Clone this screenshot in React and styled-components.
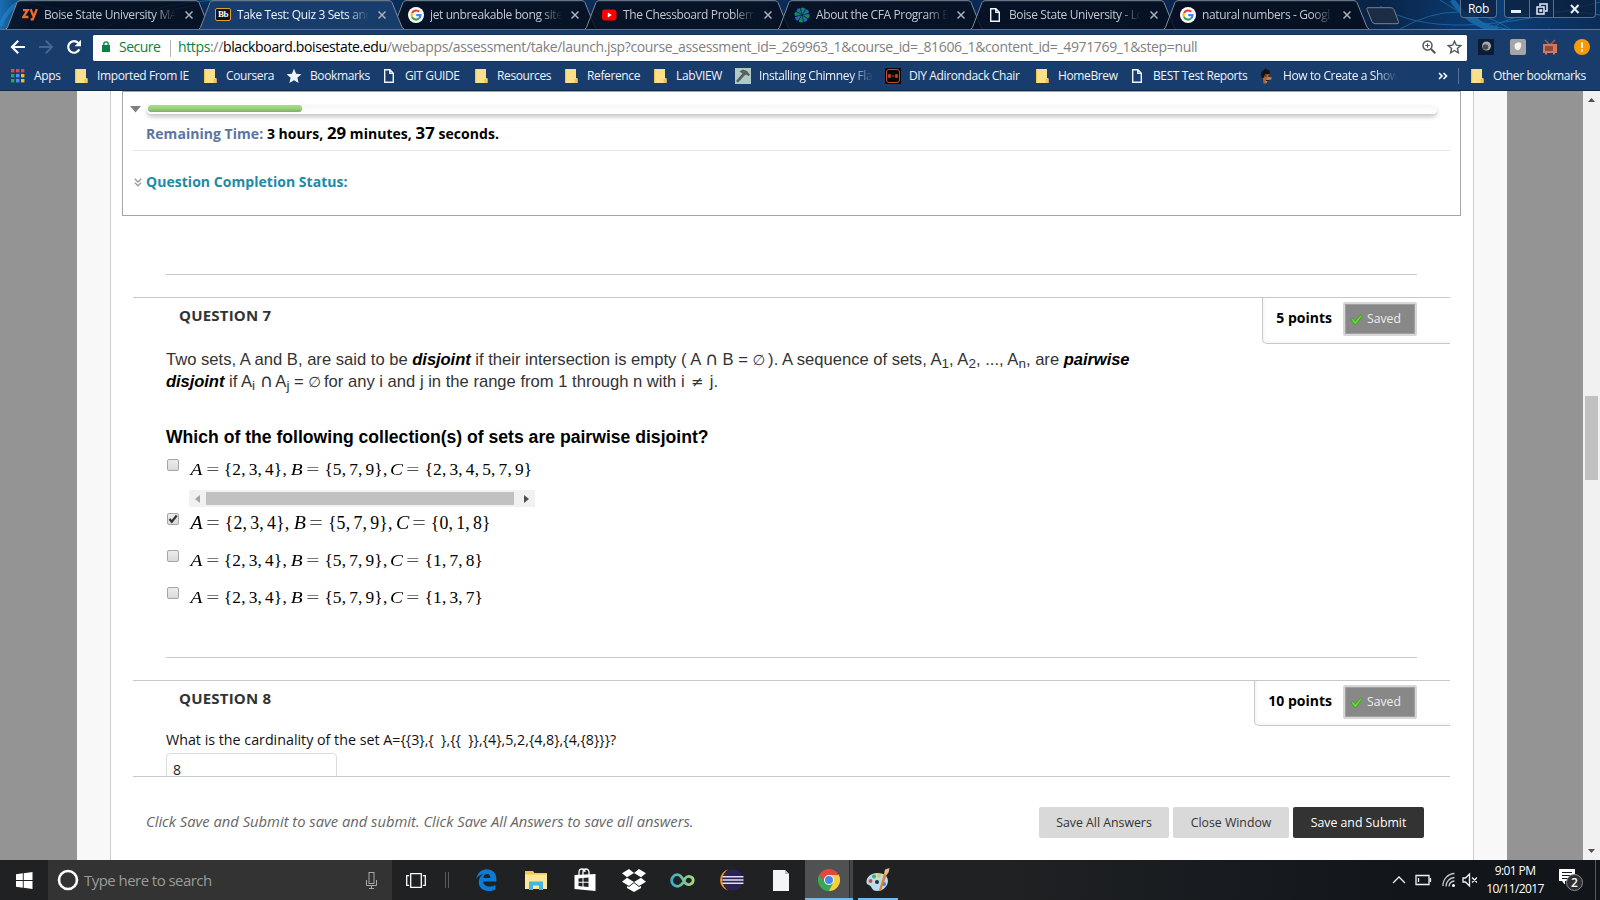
import React from "react";
import styled, { createGlobalStyle, css } from "styled-components";

const GlobalStyle = createGlobalStyle`
  * { box-sizing: border-box; }
  body { margin: 0; overflow: hidden; background: #fff; }
  svg { display: block; flex: none; }
`;

const uiFont = css`
  font-family: "Open Sans", "Noto Sans", sans-serif;
  letter-spacing: -0.38px;
  white-space: nowrap;
`;

const Screen = styled.div`
  width: 1600px;
  height: 900px;
  display: flex;
  flex-direction: column;
  overflow: hidden;
  font-family: "Open Sans", sans-serif;
`;

/* ---------- tab strip ---------- */
const TabStrip = styled.div`
  position: relative;
  height: 29px;
  flex: none;
  display: flex;
  padding-left: 6px;
  background: #0b2e5b;
  overflow: hidden;
`;
const Backdrop = styled.svg`
  position: absolute;
  left: 0;
  top: 0;
`;
const TabBox = styled.div`
  position: relative;
  z-index: ${(p) => (p.$active ? 2 : 1)};
  width: 193px;
  height: 29px;
  flex: none;
  display: flex;
  align-items: center;
  padding-left: 16px;
  color: ${(p) => (p.$active ? "#eef2f7" : "#c3c7cd")};
`;
const TabShape = styled.svg`
  position: absolute;
  left: 0;
  top: 0;
  overflow: visible;
`;
const TabIcon = styled.span`
  position: relative;
  width: 16px;
  flex: none;
`;
const TabLabel = styled.span`
  ${uiFont}
  position: relative;
  margin-left: 6px;
  width: 132px;
  font-size: 12px;
  line-height: 29px;
  mask-image: linear-gradient(to right, #000 110px, transparent 132px);
`;
const TabClose = styled.svg`
  position: relative;
  margin-left: 9px;
`;
const NewTab = styled.svg`
  position: relative;
  margin: 7px 0 0 9px;
`;
const WindowControls = styled.div`
  position: relative;
  margin-left: auto;
  display: flex;
  align-items: flex-start;
  padding-right: 4px;
  gap: 7px;
`;
const ControlGroup = styled.div`
  height: 18px;
  width: ${(p) => p.$w}px;
  border: 1px solid #56708f;
  border-top: 0;
  border-radius: 0 0 4px 4px;
  background: rgba(12, 32, 62, 0.75);
  display: flex;
  color: #fff;
  ${uiFont}
  font-size: 12px;
  line-height: 18px;
  justify-content: ${(p) => (p.$cells ? "flex-start" : "center")};
`;
const ControlCell = styled.div`
  width: ${(p) => p.$w}px;
  display: flex;
  align-items: center;
  justify-content: center;
  border-left: ${(p) => (p.$first ? "0" : "1px solid #56708f")};
`;

/* ---------- toolbar ---------- */
const Toolbar = styled.div`
  height: 33px;
  flex: none;
  display: flex;
  align-items: flex-start;
  padding: 4px 10px 0;
  background: #183d6d;
  border-top: 1px solid #5c7391;
`;
const NavIcons = styled.div`
  display: flex;
  width: 83px;
  height: 26px;
  align-items: center;
  gap: 12px;
`;
const Omnibox = styled.div`
  width: 1374px;
  height: 28px;
  border: 1px solid #142f56;
  border-width: 1px 0;
  background: #fff;
  border-radius: 2px;
  display: flex;
  align-items: flex-start;
  padding: 0 5px 0 9px;
`;
const LockIcon = styled.svg`
  margin-top: 6px;
`;
const Secure = styled.span`
  ${uiFont}
  color: #0b8043;
  font-size: 14px;
  line-height: 24px;
  letter-spacing: -0.5px;
  margin-left: 9px;
  width: 51px;
`;
const OmniDivider = styled.span`
  width: 1px;
  height: 17px;
  margin-top: 5px;
  background: #b4b4b4;
  margin-right: 7px;
`;
const Url = styled.span`
  ${uiFont}
  font-size: 14px;
  line-height: 24px;
  letter-spacing: -0.354px;
  color: #808080;
  flex: 1;
`;
const UrlScheme = styled.span`color: #0b8043;`;
const UrlHost = styled.span`color: #000;`;
const OmniActions = styled.div`
  display: flex;
  gap: 11px;
  margin-top: 5px;
`;
const Extensions = styled.div`
  display: flex;
  height: 26px;
  align-items: center;
  gap: 16px;
  margin-left: 11px;
`;

/* ---------- bookmarks ---------- */
const BookmarksBar = styled.div`
  height: 29px;
  flex: none;
  display: flex;
  align-items: center;
  padding-left: 10px;
  background: #183d6d;
  border-bottom: 1px solid #10294c;
`;
const Bookmark = styled.div`
  width: ${(p) => p.$w}px;
  display: flex;
  align-items: center;
  gap: 8px;
  flex: none;
`;
const BookmarkLabel = styled.span`
  ${uiFont}
  color: #f0f3f7;
  font-size: 12px;
  line-height: 28px;
  ${(p) =>
    p.$fade &&
    css`
      mask-image: linear-gradient(to right, #000 92px, transparent 114px);
    `}
`;
const BarDivider = styled.span`
  width: 1px;
  height: 16px;
  background: #54709a;
  margin: 0 10px;
`;

/* ---------- page ---------- */
const Viewport = styled.div`
  height: 769px;
  flex: none;
  display: flex;
  background: #949494;
  padding-left: 77px;
`;
const PageFrame = styled.div`
  width: 1430px;
  background: #f8f8f8;
  padding: 0 33px;
`;
const Sheet = styled.main`
  width: 1364px;
  height: 769px;
  border: 1px solid #ccc;
  border-width: 0 1px;
  background: #fff;
  display: flex;
  flex-direction: column;
`;
const ScrollArea = styled.div`
  height: 685px;
  overflow: hidden;
`;
const PageScrollbar = styled.div`
  margin-left: auto;
  width: 17px;
  background: #f1f1f1;
  display: flex;
  flex-direction: column;
  align-items: center;
  padding: 7px 0;
`;
const PageThumb = styled.div`
  width: 13px;
  height: 84px;
  margin: 294px 0 auto;
  background: #c1c1c1;
`;
const StatusBox = styled.section`
  margin: 0 11px 0 11px;
  width: 1339px;
  height: 125px;
  border: 1px solid #a5a5a5;
  padding: 13px 10px 0 7px;
`;
const TimerRow = styled.div`
  display: flex;
  gap: 6px;
`;
const Track = styled.div`
  width: 1290px;
  height: 9px;
  border-radius: 5px;
  padding: 0 1px;
  background: linear-gradient(#f7f7f7, #fff);
  box-shadow: 0 3px 4px rgba(0, 0, 0, 0.22);
`;
const Progress = styled.div`
  width: 154px;
  height: 7px;
  border-radius: 3px;
  background: linear-gradient(#a7e086, #9bd07c 50%, #80ab6c);
`;
const Remaining = styled.div`
  margin: 10px 0 0 16px;
  height: 20px;
  line-height: 20px;
  font-size: 14px;
  font-weight: 700;
  letter-spacing: 0.04px;
  white-space: nowrap;
  color: #000;
`;
const RemainingLabel = styled.span`color: #5c74a0;`;
const BigNumber = styled.span`
  font-size: 16.8px;
  line-height: 0;
`;
const Rule = styled.div`
  height: 1px;
  background: ${(p) => (p.$light ? "#e5e5e5" : "#c8c8c8")};
  margin: ${(p) => p.$m};
`;
const StatusTitle = styled.div`
  margin: 21px 0 0 4px;
  display: flex;
  align-items: center;
  gap: 4px;
  height: 20px;
  line-height: 20px;
  font-size: 14px;
  font-weight: 700;
  letter-spacing: 0.04px;
  color: #218aa6;
`;
const QuestionHead = styled.header`
  margin: 0 23px 0 22px;
  width: 1317px;
  height: 46px;
  display: flex;
  justify-content: space-between;
`;
const QuestionTitle = styled.h3`
  margin: 2px 0 0 46px;
  font-size: 15px;
  line-height: 30px;
  font-weight: 700;
  letter-spacing: 0.2px;
  color: #333;
`;
const PointsBox = styled.div`
  height: ${(p) => p.$h}px;
  border: 1px solid #c8c8c8;
  border-width: 0 0 1px 1px;
  border-radius: 0 0 0 5px;
  box-shadow: inset 2px -2px 3px rgba(0, 0, 0, 0.04);
  padding: 4px 33px 0 13px;
  display: flex;
  gap: 11px;
  font-size: 14px;
  line-height: 31px;
  font-weight: 700;
  color: #000;
`;
const SavedButton = styled.button`
  width: 74px;
  height: 34px;
  padding: 0 0 0 5px;
  border: 2px solid #d6d6d6;
  border-radius: 2px;
  box-shadow: inset 0 0 0 1px #a0a0a0;
  background: #888;
  display: flex;
  align-items: center;
  gap: 4px;
  font: 12.2px/28px "Open Sans", sans-serif;
  color: #eee;
`;
const Prompt = styled.p`
  margin: 5px 0 0 55px;
  width: 980px;
  height: 44px;
  font: 16.6px/22px "Liberation Sans", Arial, sans-serif;
  color: #333;
  white-space: nowrap;
  b { font-style: italic; color: #000; letter-spacing: -0.08px; }
  sub { font-size: 13.5px; line-height: 0; vertical-align: -3px; }
`;
const Symbol = styled.span`
  display: inline-block;
  text-align: center;
  line-height: 0;
  width: ${(p) => p.$w}px;
  font-family: "DejaVu Sans", sans-serif;
  font-size: ${(p) => p.$s}px;
`;
const Ask = styled.p`
  margin: 33px 0 0 55px;
  font: bold 17.6px/22px "Liberation Sans", Arial, sans-serif;
  color: #000;
`;
const Answers = styled.div`
  margin: 11px 0 0 56px;
  height: 198px;
`;
const Answer = styled.div`
  height: ${(p) => p.$h}px;
  display: flex;
  gap: 10px;
`;
const Check = styled.span`
  width: 12px;
  height: 12px;
  border: 1px solid #a5a5a5;
  border-radius: 2px;
  background: linear-gradient(#ececec, #dadada);
`;
const AnswerBody = styled.div`
  padding-top: ${(p) => p.$top}px;
`;
const Formula = styled.div`
  font-family: "Liberation Serif", "Times New Roman", serif;
  font-size: ${(p) => p.$s}px;
  line-height: 20px;
  height: 20px;
  padding-left: 0.5px;
  display: flex;
  color: #000;
`;
const Glyph = styled.span`
  width: ${(p) => p.$w}em;
  margin: 0 ${(p) => p.$mr || 0}em 0 ${(p) => p.$ml || 0}em;
  text-align: center;
  font-style: ${(p) => (p.$it ? "italic" : "normal")};
  font-size: inherit;
  transform: ${(p) => p.$t || "none"};
  color: ${(p) => p.$c || "inherit"};
`;
const InlineScrollbar = styled.div`
  margin-top: 10px;
  width: 346px;
  height: 17px;
  padding: 0 6px;
  background: #f1f1f1;
  display: flex;
  align-items: center;
  gap: 6px;
`;
const InlineThumb = styled.div`
  width: 309px;
  height: 13px;
  margin-right: 4px;
  background: #c1c1c1;
`;
const ShortPrompt = styled.p`
  margin: 3px 0 0 55px;
  font-size: 14.27px;
  line-height: 20px;
  color: #111;
  white-space: pre;
`;
const AnswerField = styled.div`
  margin: 3px 0 0 55px;
  width: 171px;
  height: 36px;
  border: 1px solid #dcdcdc;
  border-radius: 4px;
  padding: 6px 0 0 6px;
  font-size: 14px;
  line-height: 20px;
  color: #222;
`;
const SubmitBar = styled.footer`
  margin: 0 23px 0 22px;
  width: 1317px;
  height: 84px;
  border-top: 1px solid #c8c8c8;
  padding: 30px 26px 0 13px;
  display: flex;
  justify-content: space-between;
`;
const Hint = styled.span`
  font-size: 14.74px;
  line-height: 28px;
  font-style: italic;
  color: #666;
`;
const Buttons = styled.div`
  display: flex;
  gap: 4px;
`;
const ActionButton = styled.button`
  width: ${(p) => p.$w}px;
  height: 31px;
  border: 0;
  border-radius: 2px;
  padding: 0;
  background: ${(p) => (p.$dark ? "#333" : "#d9d9d9")};
  color: ${(p) => (p.$dark ? "#fff" : "#333")};
  font: 12.3px/31px "Open Sans", sans-serif;
`;

/* ---------- taskbar ---------- */
const Taskbar = styled.div`
  height: 40px;
  flex: none;
  display: flex;
  background: linear-gradient(to right, #1f2123 0 1000px, #12161b 1400px);
`;
const TaskCell = styled.div`
  width: ${(p) => p.$w}px;
  height: 40px;
  display: flex;
  align-items: center;
  justify-content: center;
  background: ${(p) => p.$bg || "transparent"};
  border-bottom: ${(p) => (p.$open ? "2px solid #76b9ed" : "0")};
  padding-top: ${(p) => (p.$open ? "2px" : "0")};
  margin-left: ${(p) => p.$ml || 0}px;
`;
const SearchBox = styled.div`
  width: 344px;
  background: #333;
  display: flex;
  align-items: center;
  padding: 0 14px 0 9px;
`;
const SearchText = styled.span`
  ${uiFont}
  font-size: 15px;
  line-height: 40px;
  letter-spacing: -0.55px;
  color: #9b9b9b;
  flex: 1;
  margin-left: 5px;
`;
const Tray = styled.div`
  margin-left: auto;
  display: flex;
  align-items: center;
`;
const Clock = styled.div`
  ${uiFont}
  width: 60px;
  margin: 0 14px 0 8px;
  text-align: center;
  color: #fff;
  font-size: 12px;
  line-height: 18px;
  letter-spacing: -0.6px;
`;
const ActionCenter = styled.div`
  position: relative;
  width: 24px;
  height: 26px;
`;
const Badge = styled.span`
  position: absolute;
  left: 7px;
  top: 7px;
  width: 17px;
  height: 17px;
  border-radius: 50%;
  border: 1px solid #8b8e91;
  background: #2c3035;
  color: #fff;
  font: 600 12px/15px "Open Sans", sans-serif;
  text-align: center;
`;
const ShowDesktop = styled.span`
  width: 1px;
  height: 40px;
  background: #55595d;
  margin: 0 4px 0 12px;
`;

/* ---------- icons ---------- */
const Zy = () => (
  <svg width="16" height="16" viewBox="0 0 16 16" fill="none" stroke="#ef6a2c" strokeWidth="2.3">
    <path d="M1 3.2h4.6L1.4 10H6.4M8.6 2.2l2.9 7M14.8 2.2l-4 10.2H8.6" />
  </svg>
);
const Blackboard = styled.span`
  display: block;
  width: 16px;
  height: 13px;
  background: #111;
  border: 1px solid #d8a631;
  border-radius: 2px;
  color: #fff;
  font: bold 9px/10px "Liberation Serif", serif;
  text-align: center;
  letter-spacing: -0.4px;
`;
const Bb = () => <Blackboard>Bb</Blackboard>;
const GoogleG = () => (
  <svg width="16" height="16" viewBox="0 0 16 16" fill="none" strokeWidth="2.2">
    <circle cx="8" cy="8" r="8" fill="#fff" />
    <path d="M11.2 4.8A4.5 4.5 0 0 0 4 6" stroke="#ea4335" />
    <path d="M4 6a4.5 4.5 0 0 0 0 4" stroke="#fbbc05" />
    <path d="M4 10a4.5 4.5 0 0 0 6.9 1.5" stroke="#34a853" />
    <path d="M10.9 11.5A4.5 4.5 0 0 0 12.5 8.2H8.2" stroke="#4285f4" />
  </svg>
);
const YouTube = () => (
  <svg width="16" height="16" viewBox="0 0 16 16">
    <rect x="1" y="2.5" width="14.5" height="11" rx="3" fill="#f00" />
    <path d="M6.8 5.6v4.8L10.8 8z" fill="#fff" />
  </svg>
);
const Cfa = () => (
  <svg width="16" height="16" viewBox="0 0 16 16">
    {[0, 45, 90, 135, 180, 225, 270, 315].map((a, i) => (
      <path key={a} d="M8 7.4L5.7 1.4Q8-.8 10.3 1.4z" fill={i % 2 ? "#2b68b4" : "#128a60"} transform={`rotate(${a + 10} 8 8)`} />
    ))}
  </svg>
);
const Page = () => (
  <svg width="16" height="16" viewBox="0 0 16 16" fill="none" stroke="#f2f4f7" strokeWidth="1.4">
    <path d="M3.7 1.7h5.2l3.4 3.6v9H3.7zM8.8 1.7v3.7h3.5" />
  </svg>
);
const Folder = () => (
  <svg width="16" height="16" viewBox="0 0 16 16">
    <path d="M2 1h11v10h1.5v4H2z" fill="#fbe08a" />
    <path d="M2 1h1.2v14H2zM11.5 11h1.5v-1h1.5v5h-3z" fill="#ecc94c" />
  </svg>
);
const AppsGrid = () => (
  <svg width="16" height="16" viewBox="0 0 16 16">
    {["#e8453c", "#e8453c", "#e8453c", "#2da44e", "#4a90f0", "#f6b926", "#2da44e", "#4a90f0", "#f6b926"].map((c, i) => (
      <rect key={i} x={1 + (i % 3) * 5} y={1 + Math.floor(i / 3) * 5} width="3.4" height="3.4" fill={c} />
    ))}
  </svg>
);
const StarSolid = () => (
  <svg width="16" height="16" viewBox="0 0 16 16">
    <path d="M8 .8l2.1 4.9 5.3.5-4 3.5 1.2 5.2L8 12.200l-4.600 2.700 1.200-5.200-4-3.500 5.300-.5z" fill="#f0f4f9" />
  </svg>
);
const Hammer = () => (
  <svg width="16" height="16" viewBox="0 0 16 16">
    <rect width="16" height="16" fill="#afc9c4" />
    <path d="M4.500 3.500L8 1.500l4 1.500 3 4-1.500 1L11 6.500 9.500 7.500 3 14.500 1 13 7.500 5.500z" fill="#575f5f" />
  </svg>
);
const BlackDecker = () => (
  <svg width="16" height="16" viewBox="0 0 16 16">
    <rect width="16" height="16" fill="#060606" />
    <rect x="1.500" y="1.500" width="13" height="13" rx="2.500" fill="none" stroke="#cf4a20" />
    <path d="M3.500 6.500h2v3h-2zM6.500 8h3M8 6.700v2.600M10.500 6.500h2v3h-2z" fill="#cf4a20" stroke="#cf4a20" strokeWidth=".6" />
  </svg>
);
const Face = () => (
  <svg width="16" height="16" viewBox="0 0 16 16">
    <path d="M3.500 5h7l-.5 6-3 4.500H4.500z" fill="#a9673c" />
    <path d="M2 7q0-4 3-5l1-1.500 2 1 2.500 1 .5 3.500-5 .5-1 3-2 1z" fill="#17110f" />
    <path d="M9 9l4 .5-1 2-3 .5-1.500 3H6z" fill="#c98252" />
    <path d="M6 8h1.500M9 8h1.500M7 12.500h3" stroke="#2a1810" />
  </svg>
);
const Chevron2 = () => (
  <svg width="10" height="8" viewBox="0 0 10 8" fill="none" stroke="#fff" strokeWidth="1.600">
    <path d="M1 1l3 3-3 3M5.500 1l3 3-3 3" />
  </svg>
);
const Tick = () => (
  <svg width="13" height="13" viewBox="0 0 13 13">
    <path d="M.8 6.300L3 5.200 5.300 8 10.500 1.800 12.500 2.600 6 11.500H4.600z" fill="#5edb30" stroke="#348f1b" strokeWidth=".6" />
  </svg>
);
const Arrow = ({ d, w, h, c = "#505050" }) => (
  <svg width={w} height={h} viewBox={`0 0 ${w} ${h}`}><path d={d} fill={c} /></svg>
);

const Chrome = () => (
  <svg width="22" height="22" viewBox="0 0 22 22">
    <path d="M11 11L1.470 5.500A11 11 0 0 1 20.530 5.500z" fill="#e0493c" />
    <path d="M11 11L20.530 5.500A11 11 0 0 1 11 22z" fill="#fccd3d" />
    <path d="M11 6h9.700l-5.400 7.500z" fill="#fccd3d" />
    <path d="M1.470 5.500L6.700 13.500 11 6z" fill="#e0493c" />
    <path d="M1.470 5.500L6.700 13.500 11 16 15.300 13.500 11 22A11 11 0 0 1 1.470 5.500z" fill="#3aa757" />
    <circle cx="11" cy="11" r="5" fill="#fff" />
    <circle cx="11" cy="11" r="4" fill="#4788f0" />
  </svg>
);
const Edge = () => (
  <svg width="21" height="22" viewBox="0 0 21 22">
    <path d="M.4 9.800C1.300 3.700 5.300.2 10.800.2c6 0 9.600 4.300 9.600 10v2.400H7.200c.2 3.400 3 5 6.300 5 2.200 0 4.200-.6 5.900-1.700v4.600C17.500 21.500 15.200 22 12.700 22 6.700 22 2.700 18.500 2.700 13c0-3.500 1.900-6.300 5-7.900C5 5.500 2.400 7 .4 9.800zM7.400 9h6.900c0-2.500-1.100-3.900-3.300-3.900S7.700 6.700 7.400 9z" fill="#0a7bd8" />
  </svg>
);
const Explorer = () => (
  <svg width="22" height="19" viewBox="0 0 22 19">
    <path d="M0 0h8l1.500 2H22v16H0z" fill="#f5c84f" />
    <path d="M0 3.500h22V18H0z" fill="#ffe69a" />
    <path d="M4 10.500h14V19h-4v-4.500H8V19H4z" fill="#41b5e8" />
  </svg>
);
const Store = () => (
  <svg width="22" height="24" viewBox="0 0 22 24">
    <path d="M5 8V4q0-3 3-3t3 3M9 7V3.500Q9.500 1 12 1t3 3v3" fill="none" stroke="#fff" strokeWidth="1.300" />
    <path d="M.5 7L21.500 6v17L.5 21z" fill="#fff" />
    <path d="M4.500 10.500l4-.4v3.700h-4zM9.500 10l5-.5v4.300h-5zM4.500 14.700h4v3.700l-4-.4zM9.500 14.700h5V19l-5-.5z" fill="#202224" />
  </svg>
);
const Dropbox = () => (
  <svg width="24" height="23" viewBox="0 0 24 23" fill="#fff">
    <path d="M7 0l5 4-7 4.300L0 4.300zM17 0l7 4.300-5 4L12 4zM5 8.800l7 4.200-5 4-7-4.200zM19 8.800l5 4L17 17l-5-4zM12 14l5 4.100 2-1.200v2L12 23l-7-4.100v-2l2 1.200z" />
  </svg>
);
const Infinity8 = () => (
  <svg width="25" height="15" viewBox="0 0 25 15" fill="none" strokeWidth="2.800">
    <defs><linearGradient id="inf"><stop offset="0" stopColor="#42a9c9" /><stop offset="1" stopColor="#a4d977" /></linearGradient></defs>
    <path d="M14 8.500C11.500 12 10 13.300 7.400 13.300A5.800 5.800 0 0 1 7.400 1.700C11.500 1.700 13 7 15.500 10.300 18 13 23.200 11 23.200 7.200S17.500 2 15 5.500z" stroke="url(#inf)" />
  </svg>
);
const Eclipse = () => (
  <svg width="24" height="22" viewBox="0 0 24 22">
    <path d="M8.500.3A11 11 0 0 0 8.500 21.700 12.500 12.500 0 0 1 8.500.3z" fill="#f7941e" />
    <circle cx="13" cy="11" r="10.600" fill="#2c2255" />
    <path d="M2.500 7.800h21M2.500 11h21M2.500 14.200h21" stroke="#e3e1ee" strokeWidth="1.500" />
  </svg>
);
const Doc = () => (
  <svg width="16" height="21" viewBox="0 0 16 21"><path d="M0 0h12l4 4v17H0z" fill="#f5f5f5" /><path d="M12 0v4h4z" fill="#bbb" /></svg>
);
const Paint = () => (
  <svg width="24" height="24" viewBox="0 0 24 24">
    <path d="M11 5c7 0 11 3 11 8s-5 10-11 10c-5 0-5-3.500-6.500-5S0 17 .5 13 5 5 11 5z" fill="#b9dcef" />
    <circle cx="4.500" cy="13" r="1.900" fill="#d9483b" /><circle cx="8" cy="8.500" r="1.900" fill="#4fae4b" />
    <circle cx="13" cy="7.500" r="1.900" fill="#f4c52c" /><circle cx="18" cy="16" r="1.900" fill="#3e7fd0" />
    <circle cx="11" cy="14" r="2" fill="#273138" />
    <path d="M21 6L15 23l-2-1 5-16z" fill="#d98434" />
    <path d="M18 6l1-4.500L23.500 0l-.8 4-2 3z" fill="#e6bd8d" />
  </svg>
);

/* ---------- data ---------- */
const tabs = [
  ["Boise State University MA", Zy],
  ["Take Test: Quiz 3 Sets and", Bb],
  ["jet unbreakable bong site", GoogleG],
  ["The Chessboard Problem", YouTube],
  ["About the CFA Program E", Cfa],
  ["Boise State University - Lo", Page],
  ["natural numbers - Googl", GoogleG],
];
const bookmarks = [
  ["Apps", AppsGrid, 63],
  ["Imported From IE", Folder, 129],
  ["Coursera", Folder, 84],
  ["Bookmarks", StarSolid, 95],
  ["GIT GUIDE", Page, 92],
  ["Resources", Folder, 90],
  ["Reference", Folder, 89],
  ["LabVIEW", Folder, 83],
  ["Installing Chimney Fla", Hammer, 150, true],
  ["DIY Adirondack Chair", BlackDecker, 149],
  ["HomeBrew", Folder, 95],
  ["BEST Test Reports", Page, 130],
  ["How to Create a Show", Face, 179, true],
];

const SetExpr = ({ name, items, last }) => (
  <>
    <Glyph $w={name === "A" ? 0.75 : name === "B" ? 0.76 : 0.74} $it $t="scaleX(1.12)">{name}</Glyph>
    <Glyph $w={0.778} $ml={0.18} $mr={0.27} $t="scaleX(1.35)" $c="#555">=</Glyph>
    <Glyph $w={0.49}>{"{"}</Glyph>
    {items.map((n, i) => (
      <React.Fragment key={i}>
        <Glyph $w={0.5}>{n}</Glyph>
        {i < items.length - 1 && <Glyph $w={0.278} $mr={0.167}>,</Glyph>}
      </React.Fragment>
    ))}
    <Glyph $w={0.49}>{"}"}</Glyph>
    {!last && <Glyph $w={0.278} $mr={0.167}>,</Glyph>}
  </>
);
const Sets = ({ c, size = 17.35 }) => (
  <Formula $s={size}>
    <SetExpr name="A" items={[2, 3, 4]} />
    <SetExpr name="B" items={[5, 7, 9]} />
    <SetExpr name="C" items={c} last />
  </Formula>
);
const Saved = () => (
  <SavedButton><Tick />Saved</SavedButton>
);

export default function App() {
  return (
    <Screen>
      <GlobalStyle />
      <TabStrip>
        <Backdrop width="1600" height="29" viewBox="0 0 1600 29">
          <defs>
            <linearGradient id="sky">
              <stop offset="0" stopColor="#1a6fb4" /><stop offset=".02" stopColor="#0a2c58" />
              <stop offset=".5" stopColor="#0b2c5a" /><stop offset=".86" stopColor="#0a2347" />
              <stop offset=".93" stopColor="#0b3f78" /><stop offset="1" stopColor="#0a2d59" />
            </linearGradient>
          </defs>
          <rect width="1600" height="29" fill="url(#sky)" />
          <g fill="none" stroke="#2490d4" opacity=".5">
            <path d="M0 26Q6 10 22 0" strokeWidth="4" />
            <path d="M100 29Q160 2 215 0M20 0q90 26 180 4" />
            <path d="M1400 29q60-34 110 0M1440 0q60 40 110 29" />
            <path d="M1452 0q20 28 46 29M1470 12q10 17 28 17" strokeWidth="5" />
            <path d="M1380 6q60 40 220-4M1490 29q40-26 110-14" />
          </g>
        </Backdrop>
        {tabs.map(([label, Icon], i) => {
          const active = i === 1;
          return (
            <TabBox key={label} $active={active}>
              <TabShape width="205" height="29" viewBox="0 0 205 29">
                <path
                  d="M0 29Q1.500 28 2 26L11 2.500Q12 .7 14 .7H190Q192 .7 193 2.500L202.500 26Q203 28 205 29"
                  fill={active ? "#183d6d" : "rgba(6,14,28,.82)"}
                  stroke="#7d8896"
                />
              </TabShape>
              <TabIcon><Icon /></TabIcon>
              <TabLabel>{label}</TabLabel>
              <TabClose width="8" height="8" viewBox="0 0 8 8" stroke="#a9b0b9" strokeWidth="1.500">
                <path d="M.5.5l7 7M7.500.5l-7 7" />
              </TabClose>
            </TabBox>
          );
        })}
        <NewTab width="36" height="18" viewBox="0 0 36 18">
          <path d="M1.500.7H25q2 0 3 2l4.500 12q.5 2-1.500 2H9q-2 0-3-2L1 2.500Q.5.7 1.500.7z" fill="#1c2c45" stroke="#76818f" />
        </NewTab>
        <WindowControls>
          <ControlGroup $w={37}>Rob</ControlGroup>
          <ControlGroup $w={92} $cells>
            <ControlCell $w={24} $first>
              <svg width="12" height="16"><rect x="0" y="9" width="10" height="3" fill="#e8edf3" /></svg>
            </ControlCell>
            <ControlCell $w={24}>
              <svg width="12" height="12" viewBox="0 0 12 12" fill="none" stroke="#e8edf3" strokeWidth="1.500">
                <path d="M4 3V1h7v7H9M1 4h7v7H1zM4 7h1.500v1H4z" />
              </svg>
            </ControlCell>
            <ControlCell $w={42}>
              <svg width="10" height="10" viewBox="0 0 10 10" stroke="#e8edf3" strokeWidth="2"><path d="M1 1l7.500 8M8.500 1L1 9" /></svg>
            </ControlCell>
          </ControlGroup>
        </WindowControls>
      </TabStrip>

      <Toolbar>
        <NavIcons>
          <svg width="16" height="16" viewBox="0 0 16 16" fill="none" stroke="#fff" strokeWidth="2.200"><path d="M15 8H2.500M8.200 1.800L2 8l6.200 6.200" /></svg>
          <svg width="16" height="16" viewBox="0 0 16 16" fill="none" stroke="#48658c" strokeWidth="2"><path d="M1 8h12.500M7.800 1.800L14 8l-6.200 6.200" /></svg>
          <svg width="16" height="16" viewBox="0 0 16 16"><path d="M13.300 10.300A5.800 5.800 0 1 1 12.300 4" fill="none" stroke="#fff" strokeWidth="2.200" /><path d="M15 .8v6.400H8.600z" fill="#fff" /></svg>
        </NavIcons>
        <Omnibox>
          <LockIcon width="8" height="11" viewBox="0 0 8 11"><path d="M0 4h8v7H0z" fill="#0b8043" /><path d="M1.800 4.500V3a2.200 2.200 0 0 1 4.400 0v1.500" fill="none" stroke="#0b8043" strokeWidth="1.300" /></LockIcon>
          <Secure>Secure</Secure>
          <OmniDivider />
          <Url>
            <UrlScheme>https</UrlScheme>://<UrlHost>blackboard.boisestate.edu</UrlHost>/webapps/assessment/take/launch.jsp?course_assessment_id=_269963_1&amp;course_id=_81606_1&amp;content_id=_4971769_1&amp;step=null
          </Url>
          <OmniActions>
            <svg width="14" height="14" viewBox="0 0 14 14" fill="none" stroke="#555" strokeWidth="1.500"><circle cx="5.500" cy="5.500" r="4.500" /><path d="M9 9l4.300 4.300" strokeWidth="2" /><path d="M3.300 5.500h4.400M5.500 3.300v4.400" strokeWidth="1.100" /></svg>
            <svg width="15" height="14" viewBox="0 0 15 14" fill="none" stroke="#555" strokeWidth="1.400"><path d="M7.500 1.200l1.800 4 4.400.4-3.300 2.900 1 4.300-3.900-2.300-3.900 2.300 1-4.300L1.300 5.600l4.400-.4z" /></svg>
          </OmniActions>
        </Omnibox>
        <Extensions>
          <svg width="16" height="16" viewBox="0 0 16 16"><rect width="16" height="16" fill="#0d1b33" /><circle cx="8.500" cy="7" r="4.500" fill="#aaa" /><circle cx="7.500" cy="8" r="2.800" fill="#444c59" /></svg>
          <svg width="16" height="16" viewBox="0 0 16 16"><rect width="16" height="16" rx="2" fill="#a5a5a5" /><path d="M5 5q3-3 6-1 1 4-2 7-4 1-4.500-4z" fill="#f3f3f3" /></svg>
          <svg width="16" height="16" viewBox="0 0 16 16"><path d="M3 1l5 5 5-5" fill="none" stroke="#a85c4c" strokeWidth="1.300" /><path d="M1 5h14v9H1zM3 14h2v1.500H3zM11 14h2v1.500h-2z" fill="#d4775c" /><path d="M3 7h8v5H3z" fill="#8f4a3e" /></svg>
          <svg width="16" height="16" viewBox="0 0 16 16"><circle cx="8" cy="8" r="8" fill="#f79a0a" /><path d="M8 3.500v5.500M8 10.500v2" stroke="#fff" strokeWidth="1.800" /></svg>
        </Extensions>
      </Toolbar>

      <BookmarksBar>
        {bookmarks.map(([label, Icon, w, fade]) => (
          <Bookmark key={label} $w={w}>
            <Icon />
            <BookmarkLabel $fade={fade}>{label}</BookmarkLabel>
          </Bookmark>
        ))}
        <Chevron2 />
        <BarDivider />
        <Bookmark $w={120}><Folder /><BookmarkLabel>Other bookmarks</BookmarkLabel></Bookmark>
      </BookmarksBar>

      <Viewport>
        <PageFrame>
          <Sheet>
            <ScrollArea>
              <StatusBox>
                <TimerRow>
                  <Arrow w={11} h={9} d="M0 1h11L5.500 7.500z" c="#808080" />
                  <Track><Progress /></Track>
                </TimerRow>
                <Remaining>
                  <RemainingLabel>Remaining Time:</RemainingLabel> 3 hours, <BigNumber>29</BigNumber> minutes, <BigNumber>37</BigNumber> seconds.
                </Remaining>
                <Rule $light $m="6px 0 0 3px" />
                <StatusTitle>
                  <svg width="8" height="9" viewBox="0 0 8 9" fill="none" stroke="#999" strokeWidth="1.300"><path d="M.8.8L4 4 7.200.8M.8 4.600L4 7.800l3.200-3.200" /></svg>
                  Question Completion Status:
                </StatusTitle>
              </StatusBox>

              <Rule $m="58px 56px 0 55px" />
              <Rule $m="22px 23px 0 22px" />
              <QuestionHead>
                <QuestionTitle>QUESTION 7</QuestionTitle>
                <PointsBox $h={46}>5 points<Saved /></PointsBox>
              </QuestionHead>
              <Prompt>
                Two sets, A and B, are said to be <b>disjoint</b> if their intersection is empty ( A <Symbol $w={13} $s={18}>∩</Symbol> B = <Symbol $w={11} $s={14.5}>∅</Symbol> ). A sequence of sets, A<sub>1</sub>, A<sub>2</sub>, ..., A<sub>n</sub>, are <b>pairwise</b>
                <br />
                <b>disjoint</b> if A<sub>i</sub> <Symbol $w={12} $s={18}>∩</Symbol> A<sub>j</sub> = <Symbol $w={11} $s={14.5}>∅</Symbol> for any i and j in the range from 1 through n with i <Symbol $w={16} $s={15}>≠</Symbol> j.
              </Prompt>
              <Ask>Which of the following collection(s) of sets are pairwise disjoint?</Ask>
              <Answers>
                <Answer $h={54}>
                  <Check />
                  <AnswerBody $top={1}>
                    <Sets c={[2, 3, 4, 5, 7, 9]} />
                    <InlineScrollbar>
                      <Arrow w={5} h={8} d="M5 0v8L0 4z" c="#a3a3a3" />
                      <InlineThumb />
                      <Arrow w={5} h={8} d="M0 0v8l5-4z" />
                    </InlineScrollbar>
                  </AnswerBody>
                </Answer>
                <Answer $h={37}>
                  <Check>
                    <svg width="10" height="10" viewBox="0 0 10 10" fill="none" stroke="#333" strokeWidth="2.200"><path d="M1.500 5l2.300 2.700L8.700 1.500" /></svg>
                  </Check>
                  <AnswerBody $top={0}><Sets c={[0, 1, 8]} size={17.8} /></AnswerBody>
                </Answer>
                <Answer $h={37}>
                  <Check />
                  <AnswerBody $top={1}><Sets c={[1, 7, 8]} /></AnswerBody>
                </Answer>
                <Answer $h={37}>
                  <Check />
                  <AnswerBody $top={1}><Sets c={[1, 3, 7]} /></AnswerBody>
                </Answer>
              </Answers>

              <Rule $m="0 56px 0 55px" />
              <Rule $m="22px 23px 0 22px" />
              <QuestionHead>
                <QuestionTitle>QUESTION 8</QuestionTitle>
                <PointsBox $h={45}>10 points<Saved /></PointsBox>
              </QuestionHead>
              <ShortPrompt>{"What is the cardinality of the set A={{3},{  },{{  }},{4},5,2,{4,8},{4,{8}}}?"}</ShortPrompt>
              <AnswerField>8</AnswerField>
            </ScrollArea>
            <SubmitBar>
              <Hint>Click Save and Submit to save and submit. Click Save All Answers to save all answers.</Hint>
              <Buttons>
                <ActionButton $w={130}>Save All Answers</ActionButton>
                <ActionButton $w={116}>Close Window</ActionButton>
                <ActionButton $w={131} $dark>Save and Submit</ActionButton>
              </Buttons>
            </SubmitBar>
          </Sheet>
        </PageFrame>
        <PageScrollbar>
          <Arrow w={7} h={4} d="M0 4h7L3.500 0z" />
          <PageThumb />
          <Arrow w={7} h={4} d="M0 0h7L3.500 4z" />
        </PageScrollbar>
      </Viewport>

      <Taskbar>
        <TaskCell $w={48}>
          <svg width="17" height="17" viewBox="0 0 17 17" fill="#fff"><path d="M0 2.300l6.800-1V8H0zM7.700 1.200L16.500 0v8H7.700zM0 9h6.800v6.700L0 14.700zM7.700 9h8.800v8l-8.800-1.200z" /></svg>
        </TaskCell>
        <SearchBox>
          <svg width="22" height="22"><circle cx="11" cy="11" r="9" fill="none" stroke="#fff" strokeWidth="2.600" /></svg>
          <SearchText>Type here to search</SearchText>
          <svg width="13" height="17" viewBox="0 0 13 17" fill="none" stroke="#a8a8a8"><rect x="4" y=".5" width="5" height="11" /><path d="M1.500 8v5.500h10V8M6.500 13.500v3M4 16.500h5" /></svg>
        </SearchBox>
        <TaskCell $w={48}>
          <svg width="20" height="15" viewBox="0 0 20 15" fill="none" stroke="#fff" strokeWidth="1.300"><path d="M4.700.7h10.600v13.600H4.700zM3.200 2.700H.7v9.600h2.500M16.800 2.700h2.500v9.600h-2.500" /></svg>
        </TaskCell>
        <TaskCell $w={14}>
          <svg width="4" height="16"><path d="M.5 0v16M3.500 0v16" stroke="#5a5a5a" /></svg>
        </TaskCell>
        <TaskCell $w={49} $ml={8}><Edge /></TaskCell>
        <TaskCell $w={49}><Explorer /></TaskCell>
        <TaskCell $w={49}><Store /></TaskCell>
        <TaskCell $w={49}><Dropbox /></TaskCell>
        <TaskCell $w={49}><Infinity8 /></TaskCell>
        <TaskCell $w={49}><Eclipse /></TaskCell>
        <TaskCell $w={49}><Doc /></TaskCell>
        <TaskCell $w={48} $open $bg="linear-gradient(to right, #505152 0 44px, #2b2c2d 44px 45px, #444546 45px)"><Chrome /></TaskCell>
        <TaskCell $w={40} $ml={5} $open><Paint /></TaskCell>
        <Tray>
          <svg width="85" height="16" viewBox="0 0 85 16" fill="none" stroke="#f1f1f1" strokeWidth="1.300">
            <path d="M1 11l6-6 6 6" />
            <path d="M24 3.500h13v9H24zM38.500 6v4M26.500 6v4" />
            <path d="M51 14A12 12 0 0 1 62.500 1.500M54 14.500A9 9 0 0 1 62.500 5.500M57 14.500A6 6 0 0 1 62.500 9" stroke="#c3c6c9" />
            <circle cx="61.500" cy="13.500" r="1.500" fill="#fff" stroke="none" />
            <path d="M71 6h2.500l4-4v12l-4-4H71zM80 5.500l5 5M85 5.500l-5 5" />
          </svg>
          <Clock>9:01 PM<br />10/11/2017</Clock>
          <ActionCenter>
            <svg width="16" height="17" viewBox="0 0 16 17"><path d="M0 0h16v12H6v4l-3-4H0z" fill="#fff" transform="translate(0 2)" /><path d="M3 5.500h10M3 8.500h10M3 11.500h6" stroke="#15191e" /></svg>
            <Badge>2</Badge>
          </ActionCenter>
          <ShowDesktop />
        </Tray>
      </Taskbar>
    </Screen>
  );
}
